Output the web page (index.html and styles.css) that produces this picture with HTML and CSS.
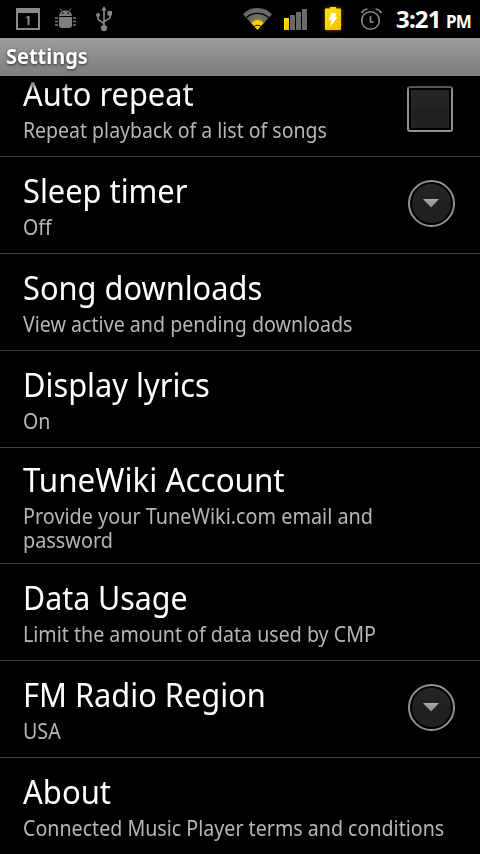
FILE: index.html
```html
<!DOCTYPE html>
<html lang="en">
<head>
<meta charset="utf-8">
<title>Settings</title>
<link rel="stylesheet" href="styles.css">
</head>
<body>
<div class="screen">
  <header class="status">
    <svg class="status-icons" width="390" height="38" viewBox="0 0 390 38" aria-hidden="true">
      <defs>
        <linearGradient id="gold" x1="0" y1="0" x2="1" y2="1"><stop offset="0" stop-color="#ffe414"/><stop offset="1" stop-color="#f5bd00"/></linearGradient>
        <filter id="glow" x="-50%" y="-50%" width="200%" height="200%"><feGaussianBlur stdDeviation="2"/></filter>
      </defs>
      <g fill="#8b8b8b">
        <path fill-rule="evenodd" d="M16 8h24v22H16zM18 13v15h20V13z"/>
        <path d="M26 17.200l2-1.200h1.500v9h-2v-7.200l-1.500.6z"/>
      </g>
      <g fill="#7e7e7e" stroke="#7e7e7e">
        <path stroke="none" fill-rule="evenodd" d="M59 16c.5-4 3.200-5.500 6.500-5.500S71.500 12 72 16zM62 12.500v1.400h1.400v-1.400zM67.600 12.500v1.400H69v-1.400z"/>
        <path stroke="none" d="M59 17h13v8q0 3-3 3h-7q-3 0-3-3z"/>
        <path fill="none" stroke-width="1" d="M62 11l-2-2.500M69 11l2-2.500"/>
        <path fill="none" stroke-width="1.500" d="M55 18h3M55 21.500h3M55 25h3M73 18h3M73 21.500h3M73 25h3"/>
      </g>
      <g fill="#858585" stroke="#858585">
        <path fill="none" stroke-width="1.700" d="M104 9v19M98 16v2.500q0 1.500 2 2.300l4 2.700M110 14v3q0 1.500-2 2.300l-4 2.200"/>
        <path stroke="none" d="M104 6l2.700 4.500h-5.400zM107.500 11h4.500v4.500h-4.500z"/>
        <circle cx="98" cy="15" r="2" stroke="none"/><circle cx="104" cy="28" r="3.100" stroke="none"/>
      </g>
      <path fill="#686868" d="M257.500 30L243 14.300Q249 8 257.500 8T272 14.300z"/>
      <path fill="none" stroke="#000" stroke-width="1.300" d="M246.500 17.500Q251 13.300 257.500 13.300T268.500 17.500"/>
      <ellipse cx="257.500" cy="22" rx="6" ry="4" fill="#c29b00" opacity=".5" filter="url(#glow)"/>
      <path fill="#ffd000" d="M257.500 30L251.500 23Q254 20 257.500 20T263.500 23z"/>
      <path fill="none" stroke="#000" stroke-width="1" d="M253.500 26.800Q257.500 23.700 261.500 26.800"/>
      <path fill="#000" d="M251 24l6 6.500h-7zM264 24l-6 6.500h7z"/>
      <path fill="url(#gold)" d="M284 18h5v12h-5z"/>
      <path fill="#696969" d="M290 15h5v15h-5zM296 12h5v18h-5zM302 9h5v21h-5z"/>
      <path fill="#bd9100" opacity=".65" filter="url(#glow)" d="M325 8h16v22h-16z"/>
      <path fill="url(#gold)" d="M330 7h6v1.500h4q1 0 1 1V29q0 1-1 1h-14q-1 0-1-1V9.500q0-1 1-1h4z"/>
      <path fill="#fff" d="M331.500 13h5l-1.500 4h2.500l-7.500 10 1.500-7h-2.500z"/>
      <g fill="none" stroke="#8b8b8b">
        <circle cx="370.500" cy="20.500" r="8.800" stroke-width="1.600"/>
        <path stroke-width="1.700" d="M370.500 16v6h3.200M361.500 13q2-3.500 6-4M381.500 13q-2-3.500-6-4"/>
      </g>
    </svg>
    <div class="clock"><span class="time">3:21</span><span class="ampm">PM</span></div>
  </header>
  <div class="titlebar"><span>Settings</span></div>
  <main class="list">
    <section class="row repeat"><div class="text"><h2>Auto repeat</h2><p>Repeat playback of a list of songs</p></div><div class="checkbox"></div></section>
    <section class="row"><div class="text"><h2>Sleep timer</h2><p>Off</p></div><div class="more"></div></section>
    <section class="row"><div class="text"><h2>Song downloads</h2><p>View active and pending downloads</p></div></section>
    <section class="row"><div class="text"><h2>Display lyrics</h2><p>On</p></div></section>
    <section class="row account"><div class="text"><h2>TuneWiki Account</h2><p>Provide your TuneWiki.com email and password</p></div></section>
    <section class="row usage"><div class="text"><h2>Data Usage</h2><p>Limit the amount of data used by CMP</p></div></section>
    <section class="row"><div class="text"><h2>FM Radio Region</h2><p>USA</p></div><div class="more"></div></section>
    <section class="row about"><div class="text"><h2>About</h2><p>Connected Music Player terms and conditions</p></div></section>
  </main>
</div>
</body>
</html>
```
FILE: styles.css
```css
* { box-sizing: border-box; }
body { margin: 0; background: #000; font-family: "Noto Sans", "Open Sans", sans-serif; }
.screen { width: 480px; height: 854px; overflow: hidden; background: #000; display: flex; flex-direction: column; }
.status { height: 38px; flex: none; display: flex; }
.status-icons { flex: none; display: block; }
.clock { display: flex; align-items: baseline; padding: 2px 0 0 6px; color: #fff; font-weight: 700; white-space: nowrap; line-height: 34px; }
.time { font-size: 24px; letter-spacing: -0.8px; width: 50px; }
.ampm { font-size: 17px; letter-spacing: -0.9px; }
.titlebar { height: 38px; flex: none; padding-left: 6px; background: linear-gradient(#9c9e9c, #7b7d7b); color: #fff; font-size: 21px; font-weight: 700; line-height: 37px; text-shadow: 0 1px 3px #222; }
.titlebar span { display: inline-block; transform: scaleX(.95); transform-origin: left; }
.list { position: relative; flex: 1; overflow: hidden; }
.list::before { content: ""; position: absolute; z-index: 1; top: 0; left: 0; right: 0; height: 15px; background: linear-gradient(#000, transparent); }
.row { height: 97px; padding: 15px 25px 0 23px; border-bottom: 1px solid #424142; display: flex; justify-content: space-between; }
.row.repeat { margin-top: -16px; }
.row.account { height: 116px; padding-top: 13px; }
.text { white-space: nowrap; }
h2 { margin: 0 0 5px; color: #fff; font-size: 33px; font-weight: 400; line-height: 38px; transform: scaleX(.933); transform-origin: left; }
p { margin: 0; color: #b5b6b5; font-size: 21px; line-height: 24px; transform: scaleX(.935); transform-origin: left; }
.repeat p { transform: scaleX(.928); }
.account h2 { transform: scaleX(.95); }
.account p { width: 400px; white-space: normal; transform: scaleX(.944); }
.usage h2 { transform: scaleX(.92); }
.about h2 { transform: scaleX(.94); }
.checkbox { flex: none; width: 46px; height: 46px; margin: 11px 2px 0 0; border: 2px solid #929292; border-top-color: #777377; border-radius: 3px; padding: 2px; background: linear-gradient(#202820, #222422 50%, #202020 50%, #222) content-box; }
.more { flex: none; width: 47px; height: 47px; margin: 7.500px .5px 0 0; border: 2px solid #929292; border-radius: 50%; display: flex; align-items: center; justify-content: center; position: relative; }
.more::before { content: ""; width: 39px; height: 39px; border-radius: 50%; background: linear-gradient(#242824, #202020 55%, #222); }
.more::after { content: ""; position: absolute; left: 13px; top: 17px; width: 17px; height: 9px; background: linear-gradient(#aaa, #858585); clip-path: polygon(0 0, 100% 0, 50% 100%); }
```
